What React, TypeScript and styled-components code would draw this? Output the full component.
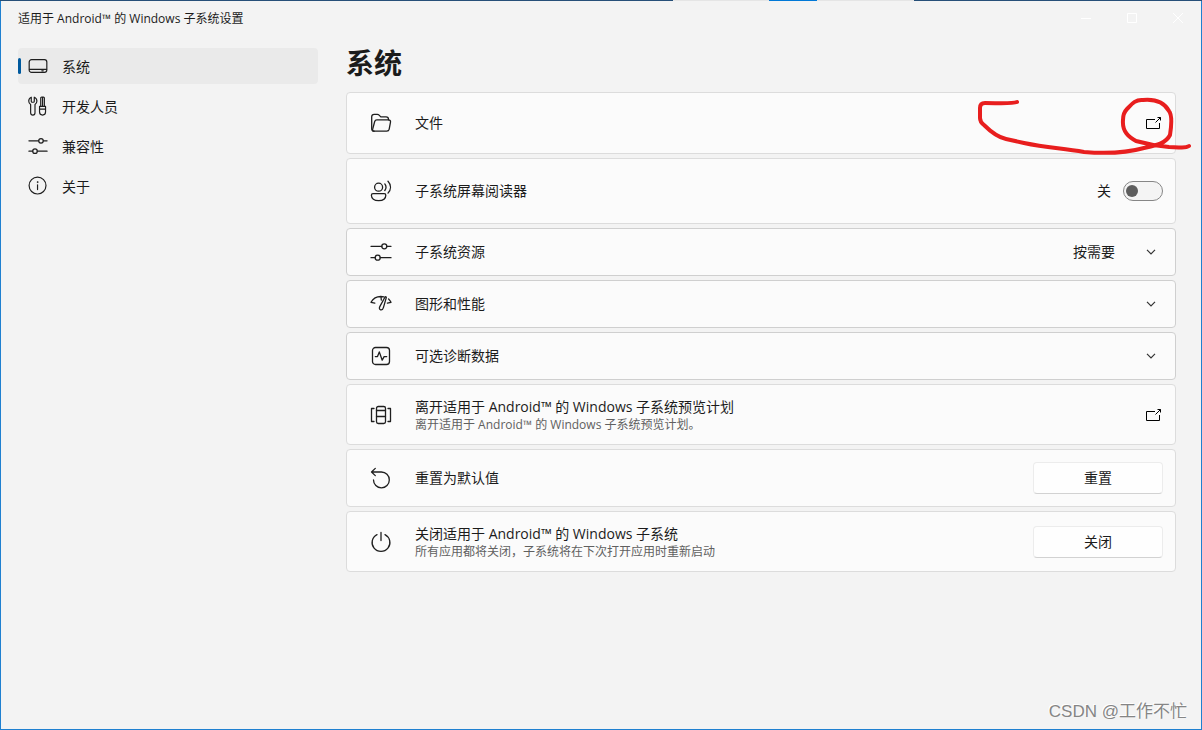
import React from "react";
import styled, { createGlobalStyle, css } from "styled-components";

const GlobalStyle = createGlobalStyle`
  *, *::before, *::after { box-sizing: border-box; }
  body { margin: 0; background: #f3f3f3; }
  body, button, input {
    font-family: "Open Sans", "Noto Sans CJK SC", sans-serif;
    color: #1b1b1b;
  }
`;

const Window = styled.div`
  min-height: 100vh;
  display: flex;
  flex-direction: column;
  position: relative;
  background: #f3f3f3;
  border: 1px solid #1f80d0;
  border-top: 0;
`;

const TopEdge = styled.div`
  display: flex;
  height: 1px;
  margin: 0 -1px;
`;

const EdgePart = styled.span<{ $color: string; $grow: number }>`
  flex: ${(p) => p.$grow} 1 0;
  background: ${(p) => p.$color};
`;

const TitleBar = styled.header`
  display: flex;
  align-items: center;
  justify-content: space-between;
  height: 34px;
  padding-left: 17px;
`;

const Title = styled.span`
  padding-top: 2px;
  font-size: 12px;
  line-height: 16px;
`;

const Controls = styled.div`
  display: flex;
`;

const ControlButton = styled.button`
  display: grid;
  place-items: center;
  width: 46px;
  height: 32px;
  padding: 0;
  border: 0;
  background: transparent;
  color: #fff;
`;

const Body = styled.div`
  flex: 1;
  display: flex;
  gap: 28px;
  padding: 7px 25px 24px 17px;
`;

const Sidebar = styled.nav`
  flex: 0 0 300px;
  display: flex;
  flex-direction: column;
  gap: 4px;
  padding-top: 6px;
`;

const NavItem = styled.a<{ $active?: boolean }>`
  display: flex;
  align-items: center;
  gap: 14px;
  height: 36px;
  padding-right: 12px;
  border-radius: 4px;
  color: inherit;
  text-decoration: none;
  font-size: 14px;
  line-height: 20px;
  background: ${(p) => (p.$active ? "#eaeaea" : "transparent")};

  &::before {
    content: "";
    width: 3px;
    height: 16px;
    margin-right: -7px;
    border-radius: 2px;
    background: ${(p) => (p.$active ? "#005a9e" : "transparent")};
  }
`;

const NavText = styled.span`
  padding-top: 2px;
`;

const Main = styled.main`
  flex: 1;
  min-width: 0;
`;

const Heading = styled.h1`
  margin: 0 0 8px;
  font-size: 28px;
  line-height: 42px;
  font-weight: 700;
`;

const CardList = styled.div`
  display: flex;
  flex-direction: column;
  gap: 4px;
`;

const cardStyle = css<{ $height: number; $strong?: boolean }>`
  position: relative;
  display: flex;
  align-items: center;
  width: 100%;
  min-height: ${(p) => p.$height}px;
  padding: 0 12px 0 23px;
  border: 1px solid ${(p) => (p.$strong ? "#cfcfcf" : "#dcdcdc")};
  border-radius: 4px;
  background: #fbfbfb;
  color: #1b1b1b;
  font-size: 14px;
  line-height: 20px;
  text-align: left;
  text-decoration: none;
`;

const Card = styled.section`${cardStyle}`;
const LinkCard = styled.a`${cardStyle}`;
const ExpanderCard = styled.button`${cardStyle}`;

const Label = styled.span`
  flex: 1;
  display: flex;
  flex-direction: column;
  padding-left: 23px;
`;

const Description = styled.small`
  font-size: 12px;
  line-height: 16px;
  color: #606060;
`;

const Value = styled.span`
  padding-right: 31px;
`;

const IconSlot = styled.span<{ $end: number }>`
  display: flex;
  padding-right: ${(p) => p.$end}px;
`;

const SwitchLabel = styled.label`
  display: flex;
  align-items: center;
  gap: 12px;
`;

const Switch = styled.input`
  appearance: none;
  display: flex;
  align-items: center;
  width: 40px;
  height: 20px;
  margin: 0;
  padding: 0 2px;
  border: 1px solid #868686;
  border-radius: 10px;
  background: #f4f4f4;

  &::before {
    content: "";
    width: 12px;
    height: 12px;
    border-radius: 50%;
    background: #5d5d5d;
  }
  &:checked { justify-content: flex-end; }
`;

const ActionButton = styled.button`
  width: 130px;
  height: 32px;
  padding: 0;
  border: 1px solid #ececec;
  border-bottom-color: #d2d2d2;
  border-radius: 4px;
  background: #fefefe;
  font-size: 14px;
  line-height: 20px;
`;

const Scribble = styled.svg`
  position: absolute;
  top: 3px;
  right: -21px;
  pointer-events: none;
`;

const Watermark = styled.span`
  position: absolute;
  right: 14px;
  bottom: 5px;
  font-family: "Liberation Sans", "Noto Sans CJK SC", sans-serif;
  font-size: 17px;
  line-height: 24px;
  color: #858585;
  text-shadow: -1px -1px 0 #fff;
`;

type IconProps = { size?: number; children: React.ReactNode };

const Icon = ({ size = 22, children }: IconProps) => (
  <svg
    width={size}
    height={size}
    viewBox="0 0 22 22"
    fill="none"
    stroke="#1f1f1f"
    strokeWidth="1.3"
    strokeLinecap="round"
    strokeLinejoin="round"
    aria-hidden="true"
  >
    {children}
  </svg>
);

const icons = {
  device: (
    <>
      <rect x="1.3" y="4" width="19.4" height="14" rx="2.6" />
      <path d="M1.600 14.700h18.800M15.200 16.300h1.600" />
    </>
  ),
  tools: (
    <>
      <path d="M3.6 1.3v4.600c0 .6.4 1 1 1h1.3c.6 0 1-.4 1-1V1.300c1.800.7 2.900 2.300 2.900 4.200 0 1.700-.8 3-2.100 3.800v9.200c0 1.500-1 2.500-2.400 2.500s-2.400-1-2.400-2.500V9.300C1.600 8.500.8 7.200.8 5.500c0-1.900 1.100-3.500 2.800-4.200z" />
      <path d="M14 11.500V2.200c0-.6.4-1 1-1h2c.6 0 1 .4 1 1v9.300M16 2v9" />
      <path d="M12.700 11.500h6.600v6.200c0 2-1.400 3.300-3.300 3.300s-3.300-1.300-3.300-3.300zM12.700 14.500h6.600" />
    </>
  ),
  sliders: (
    <>
      <path d="M1 5.3h10.8M16.8 5.3H21M1 16.7h4.2M10.2 16.7H21" />
      <circle cx="14.3" cy="5.3" r="2.5" />
      <circle cx="7.7" cy="16.7" r="2.5" />
    </>
  ),
  info: (
    <>
      <circle cx="10.500" cy="10.500" r="9.300" />
      <path d="M10.500 9.600v5.300" />
      <circle cx="10.500" cy="6.700" r=".6" fill="#1f1f1f" strokeWidth=".6" />
    </>
  ),
  folder: (
    <>
      <path d="M4.200 19.200C2.500 19.200 1.700 18.200 1.700 16.700V4.800c0-1.500.9-2.400 2.400-2.400h3.200c.8 0 1.300.2 1.800.7l1.700 1.800h5.300c1.500 0 2.400.9 2.400 2.400v.5" />
      <path d="M6.900 7.800h11.500c1.500 0 2.400 1 2.100 2.400l-1.300 7c-.3 1.300-1.100 2-2.400 2H4.200c-1.400 0-1.900-1-1.500-2.200l2-7.500c.3-1.100 1-1.700 2.200-1.700z" />
    </>
  ),
  reader: (
    <>
      <circle cx="8.600" cy="7.200" r="4" />
      <path d="M3 13.700h11.200c1 0 1.600.6 1.600 1.500 0 3.300-2.800 5.400-7.200 5.400s-7.200-2.100-7.200-5.400c0-.9.6-1.500 1.600-1.500zM14.800 3.900c1.500 2 1.500 4.600 0 6.600M18 1.300c3.300 3.600 3.300 8.200 0 11.800" />
    </>
  ),
  gauge: (
    <>
      <path d="M1 9.300C3.200 5.400 6.600 3.500 10.800 3.500c1.200 0 2 .1 3 .4M1 9.300l3.800.8M18.600 5.900c1 .9 1.800 2 2.400 3.400l-3.600.8M11 3.700l.3 3.300" />
      <path d="M16.300 4.600 13.400 14.600c-.5 1.700-1.500 2.600-2.800 2.300-1.300-.4-1.500-1.800-.8-3.300L14.900 4.200c.5-.8 1.600-.4 1.400.4z" />
    </>
  ),
  pulse: (
    <>
      <rect x="2.500" y="2.500" width="17" height="17" rx="3" />
      <path d="M5.300 11.600h2.200l1.800-4.700 2.900 8.300 1.900-3.600h2.600" />
    </>
  ),
  preview: (
    <>
      <rect x="6.500" y="2.500" width="9" height="17" rx="1.800" />
      <path d="M6.500 6.500h9M6.500 12.500h9M4 4.500H1.500v13H4M18 4.500h2.500v13H18" />
    </>
  ),
  reset: <path d="M5.300 1.400 1.500 5l3.800 3.600M1.800 5h9.600a7.900 7.900 0 1 1-7.900 7.900" />,
  power: <path d="M11 1.500v8M7 3.600a8.900 8.900 0 1 0 8 0" />,
};

const OpenIcon = () => (
  <svg width="16" height="12" viewBox="0 0 16 12" fill="none" stroke="#000" aria-hidden="true">
    <path d="M9 2.500H.5v9h13V6M9.500 5.500l5-5M11.500.5h3v3" />
  </svg>
);

const Chevron = () => (
  <svg width="10" height="6" viewBox="0 0 10 6" fill="none" stroke="#333" strokeWidth="1.200" aria-hidden="true">
    <path d="M1 .8 5 4.800 9 .8" />
  </svg>
);

const navItems = [
  { text: "系统", icon: icons.device },
  { text: "开发人员", icon: icons.tools },
  { text: "兼容性", icon: icons.sliders },
  { text: "关于", icon: icons.info },
];

const expanders = [
  { text: "子系统资源", icon: icons.sliders, value: "按需要" },
  { text: "图形和性能", icon: icons.gauge },
  { text: "可选诊断数据", icon: icons.pulse },
];

export default function App() {
  return (
    <>
      <GlobalStyle />
      <Window>
        <TopEdge>
          <EdgePart $color="#264f78" $grow={673} />
          <EdgePart $color="#e5e5e5" $grow={96} />
          <EdgePart $color="#0078d7" $grow={48} />
          <EdgePart $color="#e5e5e5" $grow={97} />
          <EdgePart $color="#264f78" $grow={288} />
        </TopEdge>
        <TitleBar>
          <Title>适用于 Android™ 的 Windows 子系统设置</Title>
          <Controls>
            <ControlButton aria-label="最小化">
              <svg width="10" height="10" stroke="currentColor"><path d="M0 5.500h10" /></svg>
            </ControlButton>
            <ControlButton aria-label="最大化">
              <svg width="10" height="10" stroke="currentColor" fill="none"><path d="M.5.5h9v9h-9z" /></svg>
            </ControlButton>
            <ControlButton aria-label="关闭窗口">
              <svg width="10" height="10" stroke="currentColor"><path d="m0 0 10 10M10 0 0 10" /></svg>
            </ControlButton>
          </Controls>
        </TitleBar>
        <Body>
          <Sidebar>
            {navItems.map((item, i) => (
              <NavItem key={item.text} href="#" $active={i === 0}>
                <Icon size={20}>{item.icon}</Icon>
                <NavText>{item.text}</NavText>
              </NavItem>
            ))}
          </Sidebar>
          <Main>
            <Heading>系统</Heading>
            <CardList>
              <LinkCard href="#" $height={62}>
                <Icon>{icons.folder}</Icon>
                <Label>文件</Label>
                <IconSlot $end={1}><OpenIcon /></IconSlot>
                <Scribble width="220" height="62" fill="none" stroke="#e81e1e" strokeWidth="4" strokeLinecap="round" strokeLinejoin="round" aria-hidden="true">
                  <path d="M41 6C36 8 22 7 9 7Q4 7 4 12V22Q4 26 8 29C15 36 21 41 30 43L48 47C72 52 86 52 108 56C132 58 150 57 168 52C182 49 190 47 194 39Q197 20 193 15C188 6 178 3 167 4C159 3 155 9 151 13Q147 17 147 24C146 36 153 41 160 45C174 49 181 50 193 51C205 51 209 53 213 50" />
                </Scribble>
              </LinkCard>
              <Card $height={66}>
                <Icon>{icons.reader}</Icon>
                <Label id="reader-label">子系统屏幕阅读器</Label>
                <SwitchLabel>
                  关
                  <Switch type="checkbox" role="switch" aria-labelledby="reader-label" />
                </SwitchLabel>
              </Card>
              {expanders.map((row) => (
                <ExpanderCard key={row.text} type="button" aria-expanded="false" $height={48} $strong>
                  <Icon>{row.icon}</Icon>
                  <Label>{row.text}</Label>
                  {row.value && <Value>{row.value}</Value>}
                  <IconSlot $end={7}><Chevron /></IconSlot>
                </ExpanderCard>
              ))}
              <LinkCard href="#" $height={61}>
                <Icon>{icons.preview}</Icon>
                <Label>
                  离开适用于 Android™ 的 Windows 子系统预览计划
                  <Description>离开适用于 Android™ 的 Windows 子系统预览计划。</Description>
                </Label>
                <IconSlot $end={1}><OpenIcon /></IconSlot>
              </LinkCard>
              <Card $height={58}>
                <Icon>{icons.reset}</Icon>
                <Label>重置为默认值</Label>
                <ActionButton type="button">重置</ActionButton>
              </Card>
              <Card $height={61}>
                <Icon>{icons.power}</Icon>
                <Label>
                  关闭适用于 Android™ 的 Windows 子系统
                  <Description>所有应用都将关闭，子系统将在下次打开应用时重新启动</Description>
                </Label>
                <ActionButton type="button">关闭</ActionButton>
              </Card>
            </CardList>
          </Main>
        </Body>
        <Watermark>CSDN @工作不忙</Watermark>
      </Window>
    </>
  );
}
